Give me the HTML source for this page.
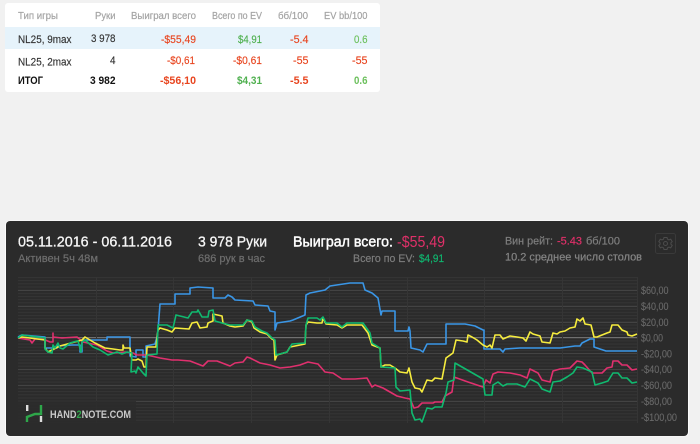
<!DOCTYPE html>
<html><head><meta charset="utf-8"><style>
html,body{margin:0;padding:0;background:#f1f1f1;width:700px;height:444px;overflow:hidden}
svg{display:block;font-family:"Liberation Sans",sans-serif;filter:blur(.25px)}
text{stroke-linejoin:round}
.h{font-size:10.2px;fill:#a4a4a4;stroke:#a4a4a4;stroke-width:.2}
.r{font-size:11.2px;fill:#333;stroke-width:.15}
.r text{stroke:#333}
.b{font-size:11.2px;font-weight:bold;fill:#111;stroke-width:0}
.a{font-size:10.8px;fill:#686868;stroke:#686868;stroke-width:.12}
.l{fill:none;stroke-width:1.6;stroke-linejoin:round}
.red{fill:#e8451f!important;stroke:#e8451f!important}
.grn{fill:#4fb04f!important;stroke:#4fb04f!important}
.lgr{fill:#6cc05c!important;stroke:#6cc05c!important}
</style></head><body>
<svg width="700" height="444" viewBox="0 0 700 444" xmlns="http://www.w3.org/2000/svg">
<defs>
<pattern id="mn" patternUnits="userSpaceOnUse" x="0" y="277" width="10" height="3.17"><rect width="10" height="1" fill="#353535"/></pattern>
</defs>
<rect x="5" y="3" width="375" height="89" rx="3" fill="#fff"/>
<rect x="5" y="27" width="375" height="22" fill="#e6f3fb"/>
<g class="h">
<text x="18" y="19" textLength="40" lengthAdjust="spacingAndGlyphs">Тип игры</text>
<text x="95" y="19" textLength="20.5" lengthAdjust="spacingAndGlyphs">Руки</text>
<text x="131" y="19" textLength="65" lengthAdjust="spacingAndGlyphs">Выиграл всего</text>
<text x="212" y="19" textLength="50" lengthAdjust="spacingAndGlyphs">Всего по EV</text>
<text x="278" y="19" textLength="30" lengthAdjust="spacingAndGlyphs">бб/100</text>
<text x="324" y="19" textLength="43.5" lengthAdjust="spacingAndGlyphs">EV bb/100</text>
</g>
<g class="r">
<text x="18" y="43" textLength="53.5" lengthAdjust="spacingAndGlyphs">NL25, 9max</text>
<text x="91" y="42" textLength="24.5" lengthAdjust="spacingAndGlyphs">3 978</text>
<text class="red" x="161" y="43" textLength="35" lengthAdjust="spacingAndGlyphs">-$55,49</text>
<text class="grn" x="238" y="43" textLength="24" lengthAdjust="spacingAndGlyphs">$4,91</text>
<text class="red" x="290" y="43" textLength="18.5" lengthAdjust="spacingAndGlyphs">-5.4</text>
<text class="lgr" x="354" y="43" textLength="13.5" lengthAdjust="spacingAndGlyphs">0.6</text>
<text x="18" y="65.5" textLength="53.5" lengthAdjust="spacingAndGlyphs">NL25, 2max</text>
<text x="110" y="64" textLength="5.5" lengthAdjust="spacingAndGlyphs">4</text>
<text class="red" x="167" y="64" textLength="28" lengthAdjust="spacingAndGlyphs">-$0,61</text>
<text class="red" x="233" y="64" textLength="29" lengthAdjust="spacingAndGlyphs">-$0,61</text>
<text class="red" x="293" y="64" textLength="15.5" lengthAdjust="spacingAndGlyphs">-55</text>
<text class="red" x="352" y="64" textLength="15.5" lengthAdjust="spacingAndGlyphs">-55</text>
</g>
<g class="b">
<text x="18" y="84" textLength="25" lengthAdjust="spacingAndGlyphs">ИТОГ</text>
<text x="90" y="84" textLength="25.5" lengthAdjust="spacingAndGlyphs">3 982</text>
<text class="red" x="160" y="84" textLength="36" lengthAdjust="spacingAndGlyphs">-$56,10</text>
<text class="grn" x="237" y="84" textLength="25" lengthAdjust="spacingAndGlyphs">$4,31</text>
<text class="red" x="290" y="84" textLength="18.5" lengthAdjust="spacingAndGlyphs">-5.5</text>
<text class="lgr" x="354" y="84" textLength="13.5" lengthAdjust="spacingAndGlyphs">0.6</text>
</g>

<rect x="5" y="220.5" width="684" height="216" rx="4" fill="#fff" opacity=".7"/>
<rect x="6" y="221" width="682" height="215" rx="4" fill="#2b2b2b"/>

<rect x="18" y="277" width="619" height="146" fill="url(#mn)"/>
<g fill="#434343">
<rect x="18" y="290" width="619" height="1"/><rect x="18" y="306" width="619" height="1"/><rect x="18" y="322" width="619" height="1"/><rect x="18" y="353" width="619" height="1"/><rect x="18" y="369" width="619" height="1"/><rect x="18" y="385" width="619" height="1"/><rect x="18" y="401" width="619" height="1"/>
</g>
<rect x="18" y="337" width="619" height="1.2" fill="#707070"/>
<g fill="#353535">
<rect x="96" y="277" width="1" height="146"/><rect x="173" y="277" width="1" height="146"/><rect x="251" y="277" width="1" height="146"/><rect x="329" y="277" width="1" height="146"/><rect x="407" y="277" width="1" height="146"/><rect x="484" y="277" width="1" height="146"/><rect x="562" y="277" width="1" height="146"/><rect x="637" y="277" width="1" height="146"/>
</g>

<polyline class="l" stroke="#3a96e6" points="18,337 22,335 45,337 45,348 57,348 57,346 72,345 80,345 80,352 82,352 82,340 107,340 107,337 130,337 130,356 136,357 136,350 143,350 143,357 146,357 146,346 155,344 157,337 158,330 160,304 175,304 175,294 190,294 190,288 198,287 213,288 213,298 225,298 228,295 232,297 235,300 253,301 255,305 268,306 270,311 275,312 275,330 277,323 290,321 293,320 305,315 306,295 310,293 325,290 330,286 350,283 363,283 365,290 372,293 378,298 381,315 382,311 395,311 395,331 408,331 409,327 410,331 411,348 420,350 423,352 427,344 446,344 446,324 465,324 475,326 483,330 484,330 484,349 500,349 503,352 505,349 520,348 560,348 575,346 580,346 582,343 590,339 594,339 594,347 600,349 606,351 637,351"/>
<polyline class="l" stroke="#e0306e" points="18,338 30,340 32,343 35,339 43,339 50,342 53,342 53,333 53,337 62,338 77,337 83,342 97,345 107,351 113,353 125,352 133,353 137,355 147,355 160,358 172,360 178,360 190,361 203,366 208,361 217,361 230,366 235,363 243,362 247,357 250,358 260,363 270,365 280,368 290,367 300,365 308,362 318,364 325,372 333,373 342,379 355,379 367,378 372,387 375,385 383,388 390,392 397,396 405,398 410,399 414,408 418,407 422,403 433,403 435,402 442,402 445,396 452,392 454,377 468,382 483,387 486,380 490,383 493,374 498,372 510,373 520,375 527,378 530,369 538,373 542,380 550,382 553,371 560,369 570,368 577,361 582,362 585,365 592,373 602,373 607,368 612,367 613,361 618,361 622,365 627,365 632,370 637,369"/>
<polyline class="l" stroke="#f6ec3e" points="18,338 22,337 45,340 45,348 48,352 52,350 60,346 82,340 85,337 90,340 95,343 105,348 113,349 120,350 123,350 123,345 124,348 130,348 132,360 136,360 138,359 142,361 144,367 146,367 147,347 156,347 158,330 160,328 167,330 172,332 175,328 189,329 192,323 197,322 200,328 207,327 208,323 213,321 213,314 222,316 223,323 230,326 235,327 243,326 247,320 252,322 254,328 260,332 267,334 272,339 274,340 275,360 277,355 287,352 290,347 300,345 305,344 306,325 308,322 317,323 322,323 323,318 326,324 337,325 342,328 347,325 362,325 368,333 372,345 380,348 381,367 385,365 390,365 395,368 400,372 407,373 409,368 412,382 415,388 420,389 422,392 427,380 432,381 435,378 442,379 446,358 453,353 456,340 463,341 467,342 468,335 472,337 477,340 483,345 487,347 490,345 492,348 495,335 500,335 503,339 510,336 517,337 523,338 526,341 530,332 533,334 540,336 542,342 550,343 553,333 557,334 560,332 565,331 570,328 575,327 577,319 580,321 583,318 585,324 591,325 594,337 597,337 607,333 610,332 612,325 618,325 622,330 627,332 628,335 632,336 637,334"/>
<polyline class="l" stroke="#10b96f" points="18,338 22,335 45,338 45,349 48,352 52,353 53,345 55,348 58,343 60,348 63,349 70,343 77,341 78,341 81,352 82,342 85,340 93,347 100,350 108,355 117,352 122,354 127,352 132,353 131,372 135,371 136,373 138,367 143,373 146,376 147,355 157,354 158,325 167,325 173,328 176,315 188,318 192,312 197,312 198,310 202,317 208,317 209,311 213,310 215,321 222,323 230,325 243,325 247,320 252,321 255,327 262,331 267,333 272,338 275,340 276,355 287,352 292,344 305,343 306,325 308,318 317,318 320,320 323,317 326,323 337,323 342,327 347,323 363,323 370,333 372,343 380,348 381,367 395,368 396,387 400,391 410,390 412,413 415,420 420,419 422,422 427,408 432,409 435,407 442,407 446,393 448,382 454,380 455,363 483,379 485,395 492,395 493,385 498,382 503,386 507,384 517,384 525,387 530,379 538,383 542,389 550,392 553,382 560,381 567,377 573,373 577,367 583,368 592,372 595,385 602,383 608,381 613,373 618,373 622,378 627,378 632,383 637,382"/>

<g class="a">
<text x="641" y="294" textLength="27.5" lengthAdjust="spacingAndGlyphs">$60,00</text>
<text x="641" y="310" textLength="27.5" lengthAdjust="spacingAndGlyphs">$40,00</text>
<text x="641" y="326" textLength="27.5" lengthAdjust="spacingAndGlyphs">$20,00</text>
<text x="641" y="341.5" textLength="22" lengthAdjust="spacingAndGlyphs">$0,00</text>
<text x="641" y="357.5" textLength="31" lengthAdjust="spacingAndGlyphs">-$20,00</text>
<text x="641" y="373" textLength="31" lengthAdjust="spacingAndGlyphs">-$40,00</text>
<text x="641" y="389" textLength="31" lengthAdjust="spacingAndGlyphs">-$60,00</text>
<text x="641" y="405" textLength="31" lengthAdjust="spacingAndGlyphs">-$80,00</text>
<text x="641" y="421" textLength="36" lengthAdjust="spacingAndGlyphs">-$100,00</text>
</g>

<rect x="18" y="401" width="118" height="22" fill="#2b2b2b" opacity=".85"/>
<rect x="26" y="405" width="2.4" height="6" fill="#ddd"/>
<rect x="39.8" y="416" width="2.4" height="6" fill="#ddd"/>
<path d="M27 422V417L35 414H41V405" fill="none" stroke="#2ea64a" stroke-width="2.4"/>
<text x="50" y="418" textLength="81" lengthAdjust="spacingAndGlyphs" font-size="11" font-weight="bold" fill="#c8c8c8">HAND<tspan fill="#2ea64a">2</tspan>NOTE.COM</text>

<g font-size="15" fill="#f6f6f6" stroke="#f6f6f6" stroke-width=".3">
<text x="18" y="246.5" textLength="154" lengthAdjust="spacingAndGlyphs">05.11.2016 - 06.11.2016</text>
<text x="198" y="246.5" textLength="69" lengthAdjust="spacingAndGlyphs">3 978 Руки</text>
<text x="293" y="246.5" textLength="100" lengthAdjust="spacingAndGlyphs" fill="#fff" stroke="#fff" stroke-width=".45">Выиграл всего:</text>
</g>
<text x="397" y="247" textLength="48" lengthAdjust="spacingAndGlyphs" font-size="16" fill="#e03069">-$55,49</text>
<g font-size="11.2" stroke-width=".2">
<text x="18" y="262" textLength="80" lengthAdjust="spacingAndGlyphs" fill="#6e6e6e" stroke="#6e6e6e">Активен 5ч 48м</text>
<text x="198" y="262" textLength="67" lengthAdjust="spacingAndGlyphs" fill="#6e6e6e" stroke="#6e6e6e">686 рук в час</text>
<text x="353" y="262" textLength="62" lengthAdjust="spacingAndGlyphs" fill="#7c7c7c" stroke="#7c7c7c">Всего по EV:</text>
<text x="419" y="262" textLength="25" lengthAdjust="spacingAndGlyphs" fill="#10b56f" stroke="#10b56f">$4,91</text>
<text x="505" y="244.5" textLength="48" lengthAdjust="spacingAndGlyphs" fill="#7e7e7e" stroke="#7e7e7e">Вин рейт:</text>
<text x="557" y="244.5" textLength="25" lengthAdjust="spacingAndGlyphs" fill="#e03069" stroke="#e03069">-5.43</text>
<text x="586" y="244.5" textLength="34" lengthAdjust="spacingAndGlyphs" fill="#7e7e7e" stroke="#7e7e7e">бб/100</text>
<text x="505" y="260.5" textLength="137" lengthAdjust="spacingAndGlyphs" fill="#858585" stroke="#858585">10.2 среднее число столов</text>
</g>

<rect x="655.5" y="233.5" width="20" height="20" rx="2" fill="none" stroke="#3a3a3a"/>
<g fill="none" stroke="#4c4c4c" stroke-width="1">
<circle cx="665.5" cy="243.5" r="2"/>
<path d="M664 237.5h3l.5 1.7 1.5.7 1.7-.8 1.5 2.5-1.3 1.2v1.4l1.3 1.2-1.5 2.5-1.7-.8-1.5.7-.5 1.7h-3l-.5-1.7-1.5-.7-1.7.8-1.5-2.5 1.3-1.2v-1.4l-1.3-1.2 1.5-2.5 1.7.8 1.5-.7z"/>
</g>
</svg>
</body></html>
